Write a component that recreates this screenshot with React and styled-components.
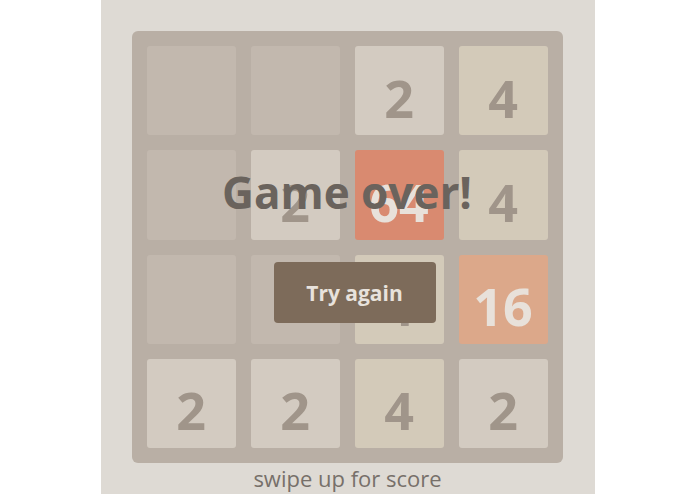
import React from 'react';
import styled, { createGlobalStyle } from 'styled-components';

const GlobalStyle = createGlobalStyle`
  html, body {
    margin: 0;
    padding: 0;
    background: #ffffff;
  }
  body {
    font-family: "Open Sans", "Noto Sans", sans-serif;
  }
`;

// tile colours as they look under the faded game-over state
const TILE_COLORS = {
  0: { bg: '#c2b8ae', fg: 'transparent' },
  2: { bg: '#d3cbc1', fg: '#a0958a' },
  4: { bg: '#d3cab9', fg: '#a0958a' },
  16: { bg: '#dca88a', fg: '#e8e1da' },
  64: { bg: '#d98a70', fg: '#e8e1da' }
};

const grid = [
  [0, 0, 2, 4],
  [0, 2, 64, 4],
  [0, 0, 4, 16],
  [2, 2, 4, 2]
];

const Page = styled.div`
  display: flex;
  justify-content: center;
  min-height: 100vh;
`;

const Panel = styled.div`
  width: 494px;
  height: 494px;
  box-sizing: border-box;
  padding: 31px 32px 0 31px;
  background: #dedad4;
  display: flex;
  flex-direction: column;
`;

const Board = styled.div`
  position: relative;
  height: 432px;
  box-sizing: border-box;
  padding: 15px;
  background: #b9afa5;
  border-radius: 6px;
  display: grid;
  grid-template-columns: repeat(4, 1fr);
  grid-template-rows: repeat(4, 1fr);
  gap: 15px;
`;

const Tile = styled.div`
  border-radius: 3px;
  background: ${(p) => TILE_COLORS[p.$value].bg};
  color: ${(p) => TILE_COLORS[p.$value].fg};
  font-weight: 700;
  font-size: 52px;
  line-height: 1;
  display: flex;
  align-items: center;
  justify-content: center;
  padding-top: 14px;
  box-sizing: border-box;
`;

const Overlay = styled.div`
  position: absolute;
  inset: 0;
  display: flex;
  flex-direction: column;
  align-items: center;
  padding-top: 131px;
`;

const Message = styled.p`
  margin: 0;
  height: 60px;
  line-height: 60px;
  font-size: 44px;
  font-weight: 700;
  color: #6a635d;
`;

const RetryButton = styled.button`
  margin-top: 40px;
  margin-left: 15px;
  width: 162px;
  height: 61px;
  border: 0;
  border-radius: 4px;
  background: #7d6b5a;
  color: #e8e2dc;
  font-family: "Open Sans", "Noto Sans", sans-serif;
  font-size: 21px;
  font-weight: 700;
  cursor: pointer;
`;

const Hint = styled.div`
  text-align: center;
  font-size: 22px;
  color: #77706a;
  margin-left: 1px;
`;

export default function App() {
  return (
    <>
      <GlobalStyle />
      <Page>
        <Panel>
          <Board>
            {grid.flat().map((v, i) => (
              <Tile key={i} $value={v}>
                {v ? v : ''}
              </Tile>
            ))}
            <Overlay>
              <Message>Game over!</Message>
              <RetryButton>Try again</RetryButton>
            </Overlay>
          </Board>
          <Hint>swipe up for score</Hint>
        </Panel>
      </Page>
    </>
  );
}
